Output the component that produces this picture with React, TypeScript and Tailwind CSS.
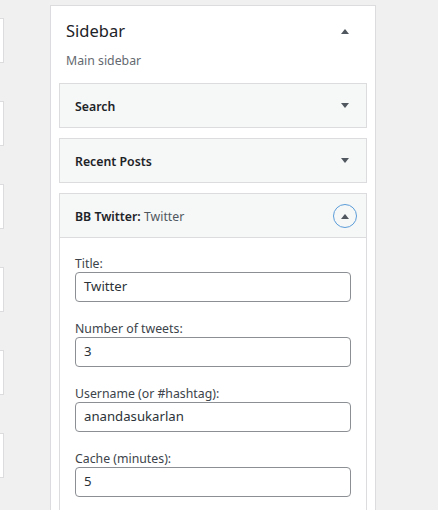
import React from "react";

const font = { fontFamily: '"Noto Sans", "Open Sans", sans-serif' };

function Caret({ up = false }: { up?: boolean }) {
  return (
    <svg width="10" height="6" viewBox="0 0 10 6" className="block">
      {up ? (
        <path d="M1 6 L5 1 L9 6 Z" fill="#50575e" />
      ) : (
        <path d="M1 0 L9 0 L5 5 Z" fill="#50575e" />
      )}
    </svg>
  );
}

function CollapsedWidget({ title }: { title: string }) {
  return (
    <div className="flex h-[45px] items-center justify-between border border-[#dcdcde] bg-[#f6f7f7] pl-[15px] pr-[16px]">
      <span className="pt-[3px] text-[12.3px] font-semibold text-[#1d2327]">{title}</span>
      <Caret />
    </div>
  );
}

function Field({ label, value }: { label: string; value: string }) {
  return (
    <div className="flex flex-col">
      <label className="pt-[3px] text-[12.3px] leading-[17px] text-[#3c434a]">{label}</label>
      <div className="flex h-[30px] items-center rounded-[4px] border border-[#8c8f94] px-[8px] text-[13.2px] text-[#2c3338]">
        {value}
      </div>
    </div>
  );
}

export default function App() {
  const sideBoxes = [0, 1, 2, 3, 4, 5];

  return (
    <div className="flex h-[510px] w-[438px] overflow-hidden bg-[#f0f0f1]" style={font}>
      {/* Left column, cut off */}
      <div className="flex w-[4px] flex-col gap-[38px] pt-[18px]">
        {sideBoxes.map((i) => (
          <div key={i} className="h-[45px] border border-l-0 border-[#dcdcde] bg-white" />
        ))}
      </div>

      {/* Sidebar panel */}
      <div className="ml-[46px] mt-[5px] w-[326px] self-start border border-[#dcdcde] bg-white">
        <div className="flex items-start justify-between pl-[15px] pr-[25px] pt-[13px]">
          <h2 className="text-[16.5px] leading-[24px] text-[#1d2327]">Sidebar</h2>
          <div className="pt-[9px]">
            <Caret up />
          </div>
        </div>
        <p className="pl-[15px] pt-[9px] text-[12.3px] leading-[18px] text-[#646970]">Main sidebar</p>

        <div className="flex flex-col gap-[10px] px-[8px] pt-[13px]">
          <CollapsedWidget title="Search" />
          <CollapsedWidget title="Recent Posts" />

          {/* Expanded widget */}
          <div className="border border-[#dcdcde]">
            <div className="flex h-[44px] items-center justify-between border-b border-[#dcdcde] bg-[#f6f7f7] pl-[15px] pr-[9px]">
              <span className="pt-[3px] text-[12.3px] text-[#50575e]">
                <span className="font-semibold text-[#1d2327]">BB Twitter:</span> Twitter
              </span>
              <div className="flex h-[24px] w-[24px] items-center justify-center rounded-full border-[1.5px] border-[#5b9dd9]">
                <Caret up />
              </div>
            </div>
            <div className="flex flex-col gap-[15px] px-[15px] pb-[20px] pt-[14px]">
              <Field label="Title:" value="Twitter" />
              <Field label="Number of tweets:" value="3" />
              <Field label="Username (or #hashtag):" value="anandasukarlan" />
              <Field label="Cache (minutes):" value="5" />
            </div>
          </div>
        </div>
      </div>
    </div>
  );
}
